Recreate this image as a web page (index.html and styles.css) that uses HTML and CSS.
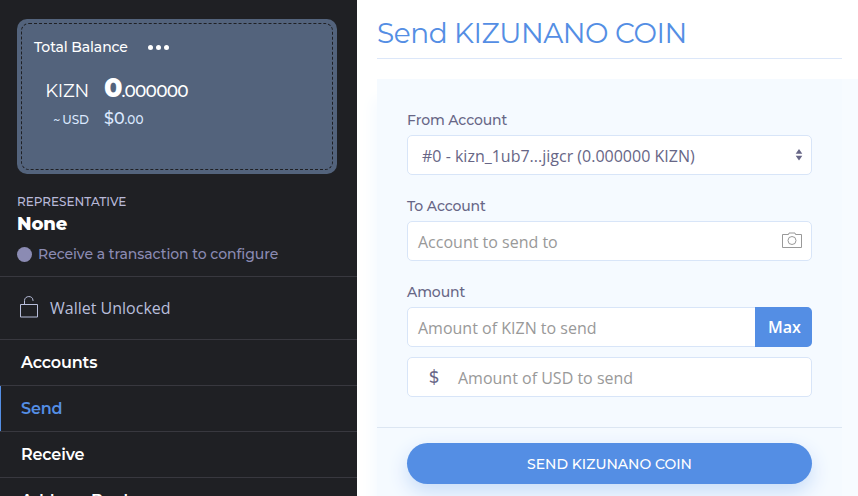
FILE: index.html
```html
<!DOCTYPE html>
<html lang="en">
<head>
<meta charset="utf-8">
<title>Send KIZUNANO COIN</title>
<link rel="stylesheet" href="styles.css">
</head>
<body>
<div class="app">
  <aside class="sidebar">
    <section class="balance">
      <div class="balance-inner">
        <div class="balance-head"><span class="balance-title">Total Balance</span><span class="dots"><i></i><i></i><i></i></span></div>
        <div class="row kizn"><span class="unit">KIZN</span><span class="value"><b>0</b><span class="decimals">.000000</span></span></div>
        <div class="row usd"><span class="unit"><span class="tilde">~</span>USD</span><span class="value"><span class="whole">$0</span><span class="cents">.00</span></span></div>
      </div>
    </section>
    <section class="rep">
      <div class="rep-label"><span>REPRESENTATIVE</span></div>
      <div class="rep-name"><span>None</span></div>
      <div class="rep-status"><i class="status-dot"></i><span>Receive a transaction to configure</span></div>
    </section>
    <div class="lock">
      <svg width="20" height="24" viewBox="0 0 20 24" fill="none" stroke="currentColor"><path d="M1.500 9.500h17v12.500h-17zM5.500 9.500V5.500c0-5 8.500-5.500 8.500 0v.500"/></svg>
      <span>Wallet Unlocked</span>
    </div>
    <nav class="nav">
      <a><span>Accounts</span></a>
      <a class="active"><span>Send</span></a>
      <a><span>Receive</span></a>
      <a><span>Address Book</span></a>
    </nav>
  </aside>
  <main class="main">
    <h1><span>Send KIZUNANO COIN</span></h1>
    <form class="panel">
      <div class="fields">
        <label><span>From Account</span></label>
        <div class="field select"><span>#0 - kizn_1ub7...jigcr (0.000000 KIZN)</span>
          <svg width="8" height="12" viewBox="0 0 8 12" fill="currentColor"><path d="M4 0l3.300 4.800H.7zM4 11.600L.7 6.800h6.600z"/></svg></div>
        <label><span>To Account</span></label>
        <div class="field hint"><span>Account to send to</span>
          <svg class="camera" width="20" height="17" viewBox="0 0 20 17" fill="none" stroke="currentColor"><path d="M.5 2.500h6l.5-1.500h6l.5 1.500h6v13H.5z" stroke-linejoin="round"/><circle cx="10" cy="8.500" r="4"/></svg></div>
        <label><span>Amount</span></label>
        <div class="field hint amount"><span>Amount of KIZN to send</span><button type="button" class="max"><span>Max</span></button></div>
        <div class="field hint dollars"><span class="sign">$</span><span>Amount of USD to send</span></div>
      </div>
      <div class="actions"><button type="button" class="send"><span>SEND KIZUNANO COIN</span></button></div>
    </form>
  </main>
</div>
</body>
</html>
```
FILE: styles.css
```css
* { box-sizing: border-box; }
body { margin: 0; height: 496px; overflow: hidden; background: #fff; font-family: Montserrat, Inter, sans-serif; }
button { font-family: inherit; border: 0; padding: 0; color: #fff; background: #548ee4; }
.app { display: flex; height: 496px; overflow: hidden; }

.sidebar { width: 357px; flex: none; background: #1f2024; color: #fff; position: relative; z-index: 1; }
.balance { height: 155px; margin: 19px 20px 0 17px; padding: 4px; border-radius: 10px; background: #53637c; }
.balance-inner { height: 147px; border: 1px dashed #1f2024; border-radius: 8px; padding-top: 13px; }
.balance-head { display: flex; align-items: center; height: 20px; padding-left: 12px; font-size: 14px; font-weight: 500; letter-spacing: -.1px; }
.balance-title { width: 114px; }
.dots { display: flex; gap: 3px; }
.dots i { width: 5px; height: 5px; border-radius: 50%; background: #fff; }
.row { display: flex; align-items: baseline; }
.unit { width: 67px; text-align: right; margin-right: 15px; }
.kizn { height: 34px; line-height: 34px; margin-top: 14px; font-size: 18px; letter-spacing: -.2px; }
.kizn b { font-size: 27px; font-weight: 800; letter-spacing: -1px; }
.kizn .decimals { font-size: 17px; font-weight: 500; letter-spacing: -.75px; }
.usd { height: 24px; line-height: 26px; margin-top: 1px; font-size: 12px; font-weight: 500; color: #dbe9ff; }
.usd .tilde { margin-right: 2px; }
.usd .whole { font-size: 16px; }
.usd .cents { letter-spacing: .1px; }

.rep { height: 103px; padding: 18px 17px 0; border-bottom: 1px solid #38383f; }
.rep-label { height: 20px; line-height: 20px; font-size: 12px; font-weight: 500; color: #b8b8d8; }
.rep-name { height: 24px; line-height: 24px; font-size: 18px; font-weight: 800; letter-spacing: -.1px; }
.rep-status { display: flex; align-items: center; height: 36px; gap: 6px; font-size: 14px; font-weight: 500; letter-spacing: -.05px; color: #8b8bb3; }
.status-dot { width: 15px; height: 15px; border-radius: 50%; background: #8b8bb3; }
.lock { display: flex; align-items: center; gap: 11px; height: 63px; padding-left: 19px; border-bottom: 1px solid #38383f; color: #b8bedb; font: 500 16px "Open Sans", sans-serif; }
.lock svg { margin-top: -3px; }
.nav a { display: flex; align-items: center; height: 46px; padding-left: 21px; border-bottom: 1px solid #38383f; font-size: 16px; font-weight: 600; letter-spacing: -.15px; }
.nav .active { color: #548ee4; box-shadow: inset 1px 0 #548ee4; }

.main { flex: 1; padding: 8px 16px 0 20px; }
h1 { margin: 0; height: 51px; line-height: 50px; border-bottom: 1px solid #dce7f9; font-size: 28px; font-weight: 400; letter-spacing: -.47px; color: #548ee4; }
.panel { margin-top: 20px; height: 417px; background: #f5faff; box-shadow: 16px 0 #f7fbff, -4px 20px 14px #f5faff; color: #676686; }
.fields { height: 349px; padding: 28px 30px 0; border-bottom: 1px solid #dce6f2; }
label { display: block; height: 28px; line-height: 26px; font-size: 14px; font-weight: 500; letter-spacing: -.1px; }
.field { display: flex; align-items: center; justify-content: space-between; height: 40px; margin-bottom: 18px; padding: 1px 9px 0 10px; border: 1px solid #d8e5f8; border-radius: 5px; background: #fff; font: 16px "Open Sans", sans-serif; }
.select { padding: 1px 8px 0 14px; }
.field svg { margin-top: -2px; }
.hint { color: #999; }
.amount { padding-right: 0; margin-bottom: 10px; }
.max { width: 57px; height: 40px; margin: -1px -1px 0 0; padding-left: 2px; border-radius: 0 5px 5px 0; font-size: 16px; font-weight: 600; }
.dollars { justify-content: flex-start; padding-left: 21px; }
.sign { width: 29px; color: #676686; font: 500 16px Montserrat, sans-serif; }
.actions { padding: 15px 30px 0; }
.send { display: block; width: 100%; height: 41px; border-radius: 21px; box-shadow: 0 8px 20px #c7dcf8; font-size: 14px; font-weight: 500; }
```
